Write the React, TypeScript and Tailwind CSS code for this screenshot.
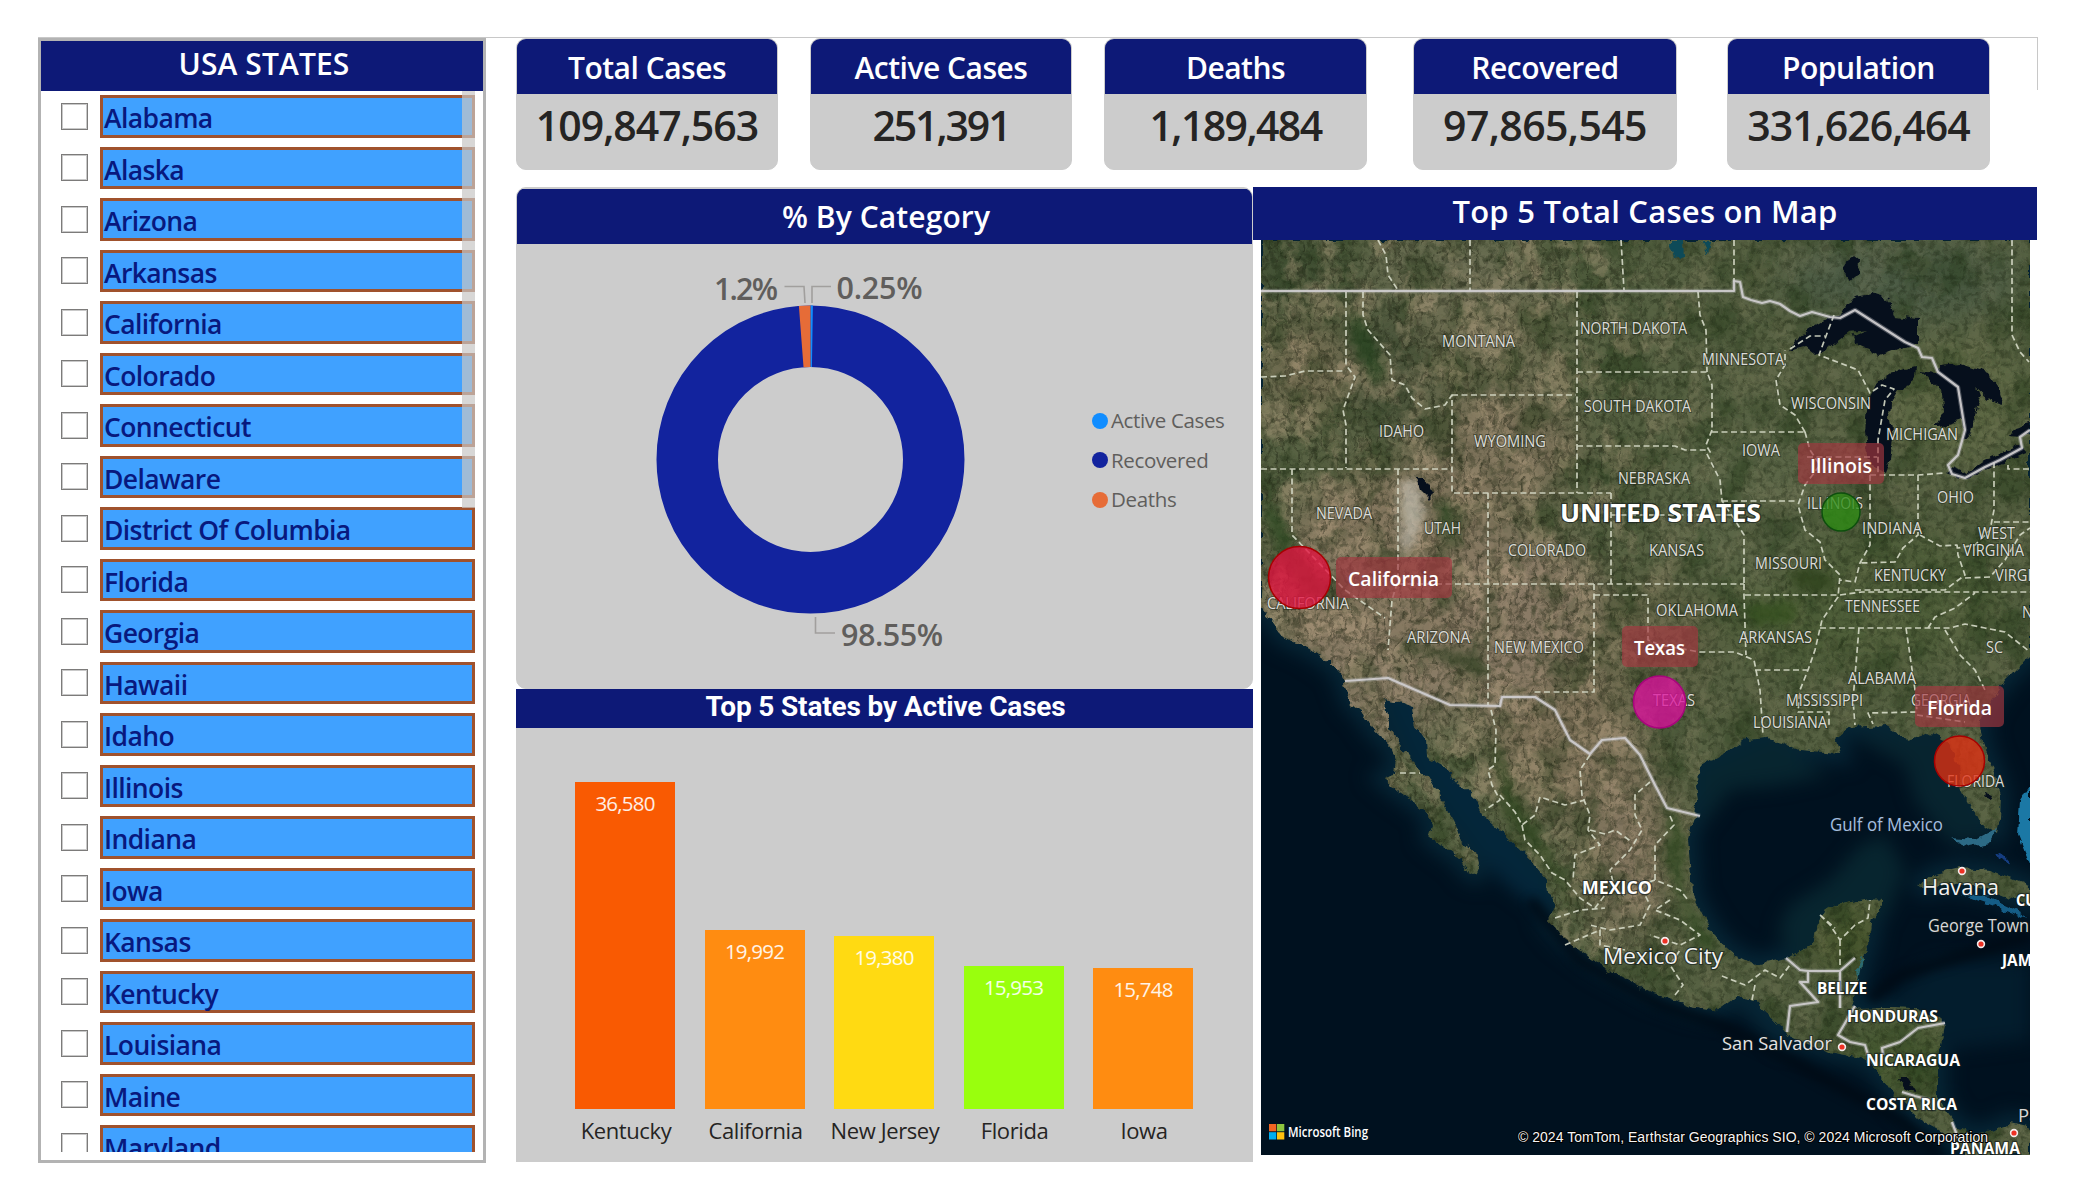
const STATES = [
  'Alabama', 'Alaska', 'Arizona', 'Arkansas', 'California', 'Colorado', 'Connecticut', 'Delaware',
  'District Of Columbia', 'Florida', 'Georgia', 'Hawaii', 'Idaho', 'Illinois', 'Indiana', 'Iowa',
  'Kansas', 'Kentucky', 'Louisiana', 'Maine', 'Maryland',
];

const KPIS = [
  { title: 'Total Cases', value: '109,847,563', box: 'w-[262px]', fit: 'tracking-[-1px]' },
  { title: 'Active Cases', value: '251,391', box: 'w-[262px] ml-8', fit: 'tracking-[-2.1px]' },
  { title: 'Deaths', value: '1,189,484', box: 'w-[263px] ml-8', fit: 'tracking-[-1.6px]' },
  { title: 'Recovered', value: '97,865,545', box: 'w-[264px] ml-[46px]', fit: 'tracking-[-0.6px]' },
  { title: 'Population', value: '331,626,464', box: 'w-[263px] ml-[50px]', fit: 'tracking-[-1px]' },
];

const BARS = [
  { name: 'Kentucky', value: '36,580', bar: 'h-[327.5px] bg-[#f95a02]' },
  { name: 'California', value: '19,992', bar: 'h-[179px] bg-[#ff8c11]' },
  { name: 'New Jersey', value: '19,380', bar: 'h-[173px] bg-[#ffda12]' },
  { name: 'Florida', value: '15,953', bar: 'h-[143px] bg-[#99ff0d]' },
  { name: 'Iowa', value: '15,748', bar: 'h-[141px] bg-[#ff8c11]' },
];

const LEGEND = [
  { name: 'Active Cases', dot: 'bg-[#118dff]' },
  { name: 'Recovered', dot: 'bg-[#12239e]' },
  { name: 'Deaths', dot: 'bg-[#e66c37]' },
];

function StatesSlicer() {
  return (
    <aside className="flex h-[1125px] w-[448px] shrink-0 flex-col border-[3px] border-[#b3b3b3] bg-white">
      <h2 className="h-[50px] bg-[#0d1977] pl-[4px] text-center text-[30px] leading-[46px] font-semibold tracking-[0.1px] text-white">
        USA STATES
      </h2>
      <div className="relative mb-2 min-h-0 flex-1 overflow-hidden pt-[4px] pr-[8px] pl-[20px]">
        <ul className="flex flex-col gap-[9px]">
          {STATES.map((s) => (
            <li key={s} className="flex h-[42.5px] shrink-0 items-center">
              <span className="mr-3 h-[27px] w-[27px] shrink-0 border-[1.5px] border-[#7c7b7a] bg-white outline-1 -outline-offset-2 outline-[#c9c9c9]" />
              <span className="h-full flex-1 border-[3px] border-[#a0522d] bg-[#40a1ff] pl-px text-[26.5px] leading-[40px] font-semibold tracking-[-0.6px] text-[#08197e]">
                {s}
              </span>
            </li>
          ))}
        </ul>
        <div className="absolute top-0 right-[8px] h-[417px] w-[13px] bg-[#c8c6c4]/70" />
      </div>
    </aside>
  );
}

function KpiCard({ title, value, box, fit }: { title: string; value: string; box: string; fit: string }) {
  return (
    <section className={`${box} h-[132px] shrink-0 overflow-hidden rounded-[10px] border border-[#cccccc] bg-[#cccccc] text-center font-semibold`}>
      <h2 className="h-[55px] bg-[#0d1977] text-[30px] leading-[57px] tracking-[-0.5px] text-white">{title}</h2>
      <p className={`${fit} text-[41px] leading-[62px] text-[#252423]`}>{value}</p>
    </section>
  );
}

function Donut() {
  const cx = 293.5;
  const cy = 215.5;
  const r = 123.25;
  const c = 2 * Math.PI * r;
  const ring = (len: number, start: number, color: string) => (
    <circle
      cx={cx} cy={cy} r={r} fill="none" stroke={color} strokeWidth="61.5"
      strokeDasharray={`${len * c} ${c}`} transform={`rotate(${start * 360 - 90} ${cx} ${cy})`}
    />
  );
  return (
    <svg width="569" height="444" viewBox="0 0 569 444" className="shrink-0">
      {ring(1, 0, '#12239e')}
      {ring(0.0025, 0, '#118dff')}
      {ring(0.012, 0.988, '#e66c37')}
      <g fill="none" stroke="#a19f9d" strokeWidth="1.6">
        <path d="M267.5 42.5H287L288 59" />
        <path d="M314 42.5H295V59" />
        <path d="M298.500 373V389H318" />
      </g>
      <g fontSize="30.500" fontWeight="600" fill="#605e5c">
        <text x="197" y="56" textLength="64">1.2%</text>
        <text x="319.500" y="55" textLength="86">0.25%</text>
        <text x="324" y="402" textLength="102">98.55%</text>
      </g>
    </svg>
  );
}

function CategoryPanel() {
  return (
    <section className="h-[502px] overflow-hidden rounded-[10px] border border-[#cccccc] bg-[#cccccc]">
      <h2 className="mt-px h-[55px] bg-[#0d1977] pl-[3px] text-center text-[30px] leading-[56px] font-semibold tracking-[0.1px] text-white">
        % By Category
      </h2>
      <div className="flex">
        <Donut />
        <ul className="mt-[157px] flex flex-col text-[20.5px] tracking-[-0.35px] text-[#605e5c]">
          {LEGEND.map((l) => (
            <li key={l.name} className="flex h-[39.500px] items-center gap-[3px] whitespace-nowrap">
              <span className={`${l.dot} ml-[6px] h-4 w-4 rounded-full`} />
              {l.name}
            </li>
          ))}
        </ul>
      </div>
    </section>
  );
}

function BarPanel() {
  return (
    <section className="h-[473px] bg-[#cccccc]">
      <h2 className="h-[39px] bg-[#0d1977] pl-[2px] text-center font-[Roboto] text-[28px] leading-[36px] font-bold tracking-[-0.15px] text-white">
        Top 5 States by Active Cases
      </h2>
      <div className="flex h-[381px] items-end gap-[29.5px] pl-[59px]">
        {BARS.map((b) => (
          <div key={b.name} className={`${b.bar} w-[100px] pt-[7px] text-center text-[20.5px] leading-[29px] tracking-[-0.8px] text-white/90`}>
            {b.value}
          </div>
        ))}
      </div>
      <div className="flex gap-[9.5px] pl-[50px] text-[22px] leading-[42px] tracking-[-0.4px] text-[#252423]">
        {BARS.map((b) => (
          <div key={b.name} className="w-[120px] text-center whitespace-nowrap">{b.name}</div>
        ))}
      </div>
    </section>
  );
}

const LAND =
  'M1261 607L1272 622 1283 637 1308 648 1330 662 1342 675 1346 690 1352 704 1362 712 1372 728 1392 748 1397 762 1395 774 1384 779 1397 790 1410 799 1425 810 1433 825 1430 836 1445 848 1462 860 1470 872 1476 874 1480 865 1477 852 1462 842 1455 822 1442 800 1430 780 1418 770 1410 755 1400 745 1392 732 1387 715 1384 700 1396 702 1412 708 1415 725 1425 740 1426 757 1445 768 1460 785 1476 800 1483 815 1500 830 1520 850 1535 865 1547 880 1548 893 1555 905 1548 920 1560 935 1580 950 1600 965 1625 978 1650 992 1668 997 1690 1006 1713 1010 1727 1005 1738 997 1755 1000 1772 1018 1788 1035 1810 1045 1830 1052 1860 1058 1870 1065 1885 1080 1900 1100 1918 1118 1940 1130 1950 1140 1965 1155H2030V1127L2010 1122 1995 1130 1975 1135 1955 1125 1945 1110 1938 1095V1060L1942 1040 1945 1025 1935 1017 1910 1008 1890 1007 1860 1008 1850 1006 1857 985 1863 960 1870 940 1872 922 1882 905 1882 900 1870 899 1835 905 1820 915 1815 930 1812 945 1795 955 1778 960 1755 965 1735 955 1718 940 1705 920 1692 895 1690 865 1688 840 1694 815 1697 800 1695 785 1700 768 1730 750 1745 740 1765 738 1785 744 1800 750 1825 752 1840 754 1835 738 1850 728 1885 726 1895 732 1908 740 1930 732 1945 740 1955 755 1960 775 1962 790 1972 810 1985 825 1997 833 2000 818 2001 795 1995 775 1985 750 1980 725 1990 700 2005 680 2030 655V240H1261ZM1915 888L1935 874 1960 868 1990 870 2030 885V905L2010 898 1985 888 1950 883Z';

const LAKES = [
  'M1790 350L1800 335 1825 320 1838 314 1855 297 1872 294 1888 299 1895 317 1918 320 1918 345 1900 348 1880 356 1857 346 1853 336 1866 330 1850 332 1830 347 1815 354 1805 346Z',
  'M1865 430L1868 400 1878 382 1890 374 1915 368 1914 376 1905 390 1897 390 1890 402 1889 420 1893 440 1890 460 1885 474 1876 470 1867 455Z',
  'M1918 371L1935 373 1940 366 1960 364 1988 373 1998 387 2003 405 1990 401 1975 387 1980 400 1975 418 1971 432 1964 440 1962 420 1945 425 1935 428 1944 412 1943 392Z',
  'M1945 472L1953 466 1968 472 1985 460 2020 445 2026 452 2005 462 1985 470 1965 480Z',
  'M2010 436L2016 427 2030 423V433L2022 437Z',
  'M1845 262L1853 256 1860 262 1859 274 1851 280 1843 270Z',
  'M1416 478L1424 478 1434 494 1429 499 1420 490Z',
  'M1898 1078L1908 1078 1917 1092 1905 1090Z',
  'M1986 792L1992 794 1990 799 1985 797Z',
];

// State and provincial boundaries, drawn dashed.
const STATE_LINES =
  'M1470 240V291M1378 240L1386 255 1388 275 1398 290M1621 240L1624 290M1734 240V282M2012 240V335L2020 352 2029 362M1346 292V365L1355 377 1343 410 1346 425V468M1261 377L1285 376 1305 371 1346 371M1363 292V315L1368 330 1390 355 1392 380 1405 385 1412 398 1425 409 1445 405 1452 395V493H1611M1452 395H1576M1577 292V493M1577 372H1707L1712 385V430M1577 446H1675L1685 450 1705 450 1720 480 1722 501 1735 520 1744 535V584M1261 469H1452M1292 469V535L1345 590 1385 618M1398 469V580L1392 600 1388 650M1488 493V705M1398 584H1744M1611 493V584M1611 515H1735M1594 584V692H1533M1594 595H1648V640L1660 645 1700 652 1735 652 1754 660 1760 690 1763 735M1744 584V595L1746 655M1698 292L1700 315 1706 330 1707 372M1712 430L1706 445 1712 455M1712 432H1805M1722 501H1798M1805 432L1795 415 1780 405 1776 380 1785 365V350M1805 432L1810 450 1820 465 1805 485 1798 505 1805 530 1820 542 1825 560 1840 575 1838 597 1822 620 1815 650 1808 670 1800 690 1798 712H1829V726M1790 349L1810 336 1825 336M1834 315L1826 336 1819 355 1840 363 1858 370 1870 393 1882 385 1894 389 1885 400 1878 440V475M1807 457H1877M1870 475H1918L1945 473M1870 475V545L1860 563 1855 582 1840 580M1918 475V535L1903 548 1895 562 1860 563M1745 595H1828L1840 595 1862 592 2030 592M1855 590L1945 590 1965 575 1958 555 1957 545 1940 546 1920 535M1994 462V510L1990 530 1975 545 1958 548M1994 522H2030M2008 465V469H2030M1965 578L1990 577 2005 560 2020 535 2030 528M1820 628H1950L1965 624 1985 628 2005 632 2030 652M1928 628L1935 617 1955 608 1975 593M1859 628L1853 700 1855 725M1906 628L1915 690 1917 712 1868 713 1873 724M1945 630L1960 655 1975 670 1985 690M1755 670H1810M1917 715L1965 722M1400 773H1420M1491 710L1496 730 1495 765 1488 770 1492 785 1500 800 1485 810M1500 795L1515 812 1522 825 1535 815 1540 797 1565 805 1585 800M1522 825L1525 840 1540 855 1552 873 1565 880 1580 898 1595 908 1605 895M1590 755L1580 770 1582 795 1590 815 1588 830 1600 845 1575 855 1573 880M1650 782L1635 795 1635 815 1642 830 1630 850 1610 870 1615 890 1625 895M1590 830L1605 834 1615 830 1632 842M1670 816L1674 825 1655 845 1655 880 1680 890 1688 900M1655 880L1640 885 1650 905 1640 925 1610 930 1590 925M1670 900L1655 910 1680 920 1700 935 1680 945 1650 935M1555 918L1580 910 1605 908M1565 945L1600 930 1600 945 1625 950M1722 976L1745 985 1765 970 1780 978 1790 965M1675 995L1683 985 1670 965 1680 950M1755 985L1752 1000M1820 915L1830 925 1840 940 1855 925 1868 918 1870 900M1840 940V965M1820 915L1835 928';

const NATION_LINES =
  'M1261 291H1734V281L1740 282 1743 297 1751 300 1762 303 1770 301 1780 304 1790 311 1800 316 1812 312 1830 317 1840 318 1855 310 1905 342 1918 348 1922 357 1932 358 1938 372 1958 387 1965 430 1958 455 1948 465 1952 474 1965 478 1985 467 2000 460 2022 448 2020 437 2030 430M1345 681L1388 678 1450 705 1500 706 1502 697 1535 697 1555 710 1570 740 1590 754 1602 740 1625 738 1640 755 1655 785 1667 808 1700 816M1786 958L1800 970 1808 971 1840 971V1008M1808 971V982L1800 982 1818 1002 1790 1006 1787 1032M1840 971L1855 958M1855 1006L1838 1035 1850 1042 1865 1045 1868 1055M1945 1023L1918 1028 1900 1042 1882 1048 1883 1055M1902 1092L1915 1096 1930 1100M1952 1122L1958 1138';

type Label = [string, number, number, number];

const STATE_LABELS: Label[] = [
  ['MONTANA', 1442, 347, 73], ['NORTH DAKOTA', 1580, 334, 107], ['SOUTH DAKOTA', 1584, 412, 107],
  ['IDAHO', 1379, 437, 45], ['WYOMING', 1474, 447, 72], ['NEVADA', 1316, 519, 56], ['UTAH', 1424, 534, 37],
  ['COLORADO', 1508, 556, 78], ['KANSAS', 1649, 556, 55], ['NEBRASKA', 1618, 484, 72], ['MINNESOTA', 1702, 365, 82],
  ['WISCONSIN', 1791, 409, 80], ['MICHIGAN', 1886, 440, 72], ['IOWA', 1742, 456, 38], ['OHIO', 1937, 503, 37],
  ['ILLINOIS', 1807, 509, 56], ['INDIANA', 1862, 534, 60], ['WEST', 1978, 539, 37], ['VIRGINIA', 1963, 556, 61],
  ['MISSOURI', 1755, 569, 67], ['KENTUCKY', 1874, 581, 72], ['VIRGINIA', 1995, 581, 61], ['OKLAHOMA', 1656, 616, 82],
  ['TENNESSEE', 1845, 612, 75], ['NC', 2022, 618, 20], ['ARKANSAS', 1739, 643, 73], ['SC', 1986, 653, 17],
  ['ARIZONA', 1407, 643, 63], ['NEW MEXICO', 1494, 653, 90], ['CALIFORNIA', 1267, 609, 82], ['ALABAMA', 1848, 684, 68],
  ['TEXAS', 1653, 706, 42], ['MISSISSIPPI', 1786, 706, 77], ['GEORGIA', 1911, 706, 60], ['LOUISIANA', 1753, 728, 74],
  ['FLORIDA', 1947, 787, 57],
];

const NATION_LABELS: Label[] = [
  ['BELIZE', 1817, 994, 50], ['HONDURAS', 1847, 1022, 91], ['NICARAGUA', 1866, 1066, 94],
  ['COSTA RICA', 1866, 1110, 91], ['PANAMA', 1950, 1154, 70], ['CUBA', 2016, 906, 40], ['JAMAICA', 2002, 966, 66],
];

const CITY_DOTS = [[1665, 941], [1962, 871], [1981, 944], [1842, 1047], [2014, 1133]];

const BUBBLES = [
  { name: 'California', cx: 1299.5, cy: 577.5, r: 31, fill: '#e3123f', line: '#a80000', bx: 1336, by: 557, bw: 116, tx: 1348, ty: 586, tw: 91 },
  { name: 'Illinois', cx: 1841, cy: 512, r: 19, fill: '#2b8a12', line: '#0d4f0d', bx: 1798, by: 443, bw: 86, tx: 1810, ty: 473, tw: 62 },
  { name: 'Texas', cx: 1659.5, cy: 702, r: 26, fill: '#dd129c', line: '#a8057c', bx: 1622, by: 626, bw: 76, tx: 1634, ty: 655, tw: 51 },
  { name: 'Florida', cx: 1959.5, cy: 761, r: 25, fill: '#e02f12', line: '#a80000', bx: 1915, by: 686, bw: 89, tx: 1927, ty: 715, tw: 65 },
];

function MapCanvas() {
  return (
    <svg width="769" height="915" viewBox="1261 240 769 915" className="ml-[8px] block">
      <defs>
        <clipPath id="land"><path d={LAND} clipRule="evenodd" /></clipPath>
        <filter id="soft" x="-50%" y="-50%" width="200%" height="200%" colorInterpolationFilters="sRGB"><feGaussianBlur stdDeviation="20" /></filter>
        <filter id="patch" x="-50%" y="-50%" width="200%" height="200%" colorInterpolationFilters="sRGB"><feGaussianBlur stdDeviation="5" /></filter>
        <filter id="edge" x="-10%" y="-10%" width="120%" height="120%" colorInterpolationFilters="sRGB"><feGaussianBlur stdDeviation="9" /></filter>
        <filter id="rough" x="-2%" y="-2%" width="104%" height="104%" colorInterpolationFilters="sRGB">
          <feTurbulence type="fractalNoise" baseFrequency="0.09" numOctaves="3" seed="4" />
          <feDisplacementMap in="SourceGraphic" scale="9" xChannelSelector="R" yChannelSelector="G" />
          <feGaussianBlur stdDeviation="0.7" />
        </filter>
        <filter id="dark" x="0" y="0" width="100%" height="100%" colorInterpolationFilters="sRGB">
          <feTurbulence type="fractalNoise" baseFrequency="0.028 0.02" numOctaves="6" seed="11" />
          <feColorMatrix values="0 0 0 0 0.15  0 0 0 0 0.23  0 0 0 0 0.11  4.4 0 0 0 -2.1" />
        </filter>
        <filter id="light" x="0" y="0" width="100%" height="100%" colorInterpolationFilters="sRGB">
          <feTurbulence type="fractalNoise" baseFrequency="0.035 0.025" numOctaves="6" seed="29" />
          <feColorMatrix values="0 0 0 0 0.72  0 0 0 0 0.64  0 0 0 0 0.52  0 4.2 0 0 -1.95" />
        </filter>
        <filter id="ridges" x="0" y="0" width="100%" height="100%" colorInterpolationFilters="sRGB">
          <feTurbulence type="turbulence" baseFrequency="0.09 0.05" numOctaves="4" seed="17" />
          <feColorMatrix values="0 0 0 0 0.10  0 0 0 0 0.11  0 0 0 0 0.06  -6 0 0 0 1.5" />
        </filter>
        <filter id="grain" x="0" y="0" width="100%" height="100%" colorInterpolationFilters="sRGB">
          <feTurbulence type="fractalNoise" baseFrequency="0.16" numOctaves="3" seed="7" />
          <feColorMatrix values="0 0 0 0 0.08  0 0 0 0 0.12  0 0 0 0 0.05  0 0 3 0 -1.3" />
        </filter>
        <linearGradient id="fadeWest">
          <stop offset="0" stopColor="#fff" />
          <stop offset=".42" stopColor="#fff" />
          <stop offset=".6" stopColor="#444" />
          <stop offset="1" stopColor="#333" />
        </linearGradient>
        <mask id="west"><rect x="1261" y="240" width="769" height="915" fill="url(#fadeWest)" /></mask>
      </defs>
      <rect x="1261" y="240" width="769" height="915" fill="#00111f" />
      <g filter="url(#edge)">
        <path d={LAND} fill="#0a2a38" stroke="#052434" strokeWidth="20" />
        <path d="M1384 690L1420 700 1550 885 1545 915 1500 880 1420 770Z" fill="#04263a" />
        <path d="M1800 975L1778 930 1790 905 1830 880 1860 845 1885 835 1905 870 1890 910 1830 950Z" fill="#07252f" />
        <path d="M1700 770L1780 735 1800 760 1830 775 1780 785 1730 790 1700 830Z" fill="#07252f" />
        <path d="M1850 735L1950 735 1990 840 1950 845 1915 800 1905 765Z" fill="#07242f" />
        <path d="M1735 1005L1760 1005 1800 1050 1780 1050Z" fill="#062636" />
        <path d="M1885 1005L1930 960 2030 960V1040L1945 1050Z" fill="#031d2d" />
      </g>
      <g filter="url(#patch)" fill="none" stroke="#000a14" strokeWidth="12" opacity=".8">
        <path d="M1530 900L1580 960 1660 1005 1720 1025 1790 1060 1900 1120 1940 1155" />
        <path d="M1870 1000L1900 975 2030 935" />
      </g>
      <g filter="url(#rough)">
        <g clipPath="url(#land)">
          <rect x="1261" y="240" width="769" height="915" fill="#566142" />
          <g filter="url(#soft)">
            <ellipse cx="1400" cy="590" rx="130" ry="130" fill="#84775f" />
            <ellipse cx="1360" cy="690" rx="90" ry="60" fill="#8b7d67" />
            <ellipse cx="1530" cy="640" rx="80" ry="110" fill="#8a7b66" />
            <ellipse cx="1500" cy="450" rx="80" ry="60" fill="#7b7159" />
            <ellipse cx="1310" cy="370" rx="50" ry="50" fill="#766f54" />
            <ellipse cx="1490" cy="340" rx="80" ry="60" fill="#717054" />
            <ellipse cx="1450" cy="270" rx="90" ry="30" fill="#6f7056" />
            <ellipse cx="1300" cy="270" rx="50" ry="40" fill="#3f4e32" />
            <ellipse cx="1390" cy="370" rx="40" ry="60" fill="#485239" />
            <ellipse cx="1570" cy="750" rx="80" ry="70" fill="#7f735a" />
            <ellipse cx="1630" cy="850" rx="50" ry="80" fill="#83765f" />
            <ellipse cx="1860" cy="600" rx="150" ry="70" fill="#4e5e39" />
            <ellipse cx="1750" cy="500" rx="80" ry="90" fill="#5b6647" />
            <ellipse cx="1900" cy="280" rx="120" ry="40" fill="#4c5c46" />
            <ellipse cx="1850" cy="940" rx="40" ry="40" fill="#46552c" />
            <ellipse cx="1900" cy="1060" rx="60" ry="40" fill="#41552d" />
            <ellipse cx="1650" cy="640" rx="60" ry="60" fill="#606245" />
            <ellipse cx="1960" cy="400" rx="70" ry="60" fill="#5d6844" />
          </g>
          <rect x="1261" y="240" width="769" height="915" filter="url(#dark)" opacity="0.46" />
          <g mask="url(#west)">
            <rect x="1261" y="240" width="769" height="915" filter="url(#light)" opacity="0.44" />
            <rect x="1261" y="240" width="769" height="915" filter="url(#ridges)" opacity="0.36" />
          </g>
          <rect x="1261" y="240" width="769" height="915" filter="url(#grain)" opacity="0.36" />
          <g filter="url(#patch)" opacity=".75">
            <path d="M1400 485L1415 478 1425 510 1415 540 1402 560Z" fill="#c2bcae" />
            <path d="M1263 500L1278 512 1293 540 1330 590 1325 602 1300 590 1275 545Z" fill="#2d4a22" />
            <path d="M1352 310L1368 330 1388 375 1375 385 1350 340Z" fill="#274420" />
            <path d="M1440 500L1452 500 1455 550 1440 530Z" fill="#2c4722" />
            <path d="M1490 730L1515 790 1560 870 1575 920 1550 870 1505 815Z" fill="#2f4620" />
            <path d="M1665 800L1685 830 1685 900 1720 950 1700 950 1670 880Z" fill="#324b23" />
            <path d="M1395 640L1480 655 1490 680 1440 660Z" fill="#3a472a" />
            <path d="M1785 570L1830 572 1835 592 1800 590Z" fill="#33461f" />
            <path d="M1745 605L1800 600 1790 625 1750 622Z" fill="#35501f" />
          </g>
        </g>
        {LAKES.map((d) => <path key={d} d={d} fill="#060f1c" />)}
        <path d="M1671 242L1682 242 1683 256 1676 258ZM1702 242L1711 242 1708 254Z" fill="#0d4a58" />
        <path d="M2030 785L2020 800 2018 835 2030 865Z" fill="#1b78a5" />
        <path d="M1950 838L1975 840 1998 828 1990 843 1970 847Z" fill="#2c6a85" />
        <path d="M1995 852L2004 856 2010 863 1998 859Z" fill="#153d80" />
        <path d="M1960 894L1990 898 2010 907 2030 918 2015 914 1985 903Z" fill="#155d86" />
        <path d="M1858 965L1863 955 1859 985Z" fill="#2b6a70" />
      </g>
      <g fill="none" strokeLinejoin="round">
        <path d={STATE_LINES} stroke="#d6dac8" strokeWidth="1.7" strokeDasharray="6 3.500" opacity=".9" />
        <path d={NATION_LINES} stroke="#d5d4d6" strokeWidth="4.500" opacity=".3" />
        <path d={NATION_LINES} stroke="#cfcdcf" strokeWidth="2.2" opacity=".92" />
      </g>
      <g fontSize="16" fill="#dcdcd8" stroke="#20281a" strokeOpacity=".5" strokeWidth="2" paintOrder="stroke">
        {STATE_LABELS.map(([t, x, y, w]) => (
          <text key={`${t}${x}`} x={x} y={y} textLength={w} lengthAdjust="spacingAndGlyphs">{t}</text>
        ))}
      </g>
      <g fontSize="16.500" fontWeight="700" fill="#fff" stroke="#10181a" strokeOpacity=".6" strokeWidth="2.500" paintOrder="stroke">
        {NATION_LABELS.map(([t, x, y, w]) => (
          <text key={t} x={x} y={y} textLength={w} lengthAdjust="spacingAndGlyphs">{t}</text>
        ))}
        <text x="1560" y="522" fontSize="25" textLength="201" lengthAdjust="spacingAndGlyphs">UNITED STATES</text>
        <text x="1582" y="894" fontSize="18.500" textLength="70" lengthAdjust="spacingAndGlyphs">MEXICO</text>
      </g>
      <g fill="#f2f2f2" stroke="#101a1c" strokeOpacity=".6" strokeWidth="2.200" paintOrder="stroke">
        <text x="1603" y="964" fontSize="22" textLength="120" lengthAdjust="spacingAndGlyphs">Mexico City</text>
        <text x="1922" y="895" fontSize="22" textLength="77" lengthAdjust="spacingAndGlyphs">Havana</text>
        <text x="1928" y="932" fontSize="18.500" textLength="101" lengthAdjust="spacingAndGlyphs" fill="#d8d8d8">George Town</text>
        <text x="1722" y="1050" fontSize="19" textLength="110" lengthAdjust="spacingAndGlyphs" fill="#e4e4e4">San Salvador</text>
        <text x="2018" y="1122" fontSize="18.500" fill="#d8d8d8">Panama City</text>
        <text x="1830" y="831" fontSize="18" textLength="113" lengthAdjust="spacingAndGlyphs" fill="#a3bfe0">Gulf of Mexico</text>
      </g>
      {CITY_DOTS.map(([x, y]) => <circle key={x} cx={x} cy={y} r="3.400" fill="#ee3124" stroke="#f3eded" strokeWidth="1.600" />)}
      {BUBBLES.map((b) => (
        <g key={b.name}>
          <circle cx={b.cx} cy={b.cy} r={b.r} fill={b.fill} fillOpacity=".78" stroke={b.line} strokeWidth="1.500" />
          <rect x={b.bx} y={b.by} width={b.bw} height="41" rx="5" fill="#a4373f" fillOpacity=".66" />
          <text x={b.tx} y={b.ty} fontSize="20.500" fontWeight="600" fill="#fff" textLength={b.tw} lengthAdjust="spacingAndGlyphs">{b.name}</text>
        </g>
      ))}
      <g>
        <rect x="1269" y="1124" width="7.300" height="7.300" fill="#f26522" />
        <rect x="1277" y="1124" width="7.300" height="7.300" fill="#8dc63f" />
        <rect x="1269" y="1132.200" width="7.300" height="7.300" fill="#00aeef" />
        <rect x="1277" y="1132.200" width="7.300" height="7.300" fill="#ffc20e" />
        <text x="1288" y="1137" fontSize="14" fontWeight="600" fill="#fff" textLength="80" lengthAdjust="spacingAndGlyphs">Microsoft Bing</text>
        <text x="1518" y="1142" fontSize="14" fontFamily="Liberation Sans" fill="#f5f5f5" stroke="#000" strokeWidth="2" paintOrder="stroke" textLength="470">
          © 2024 TomTom, Earthstar Geographics SIO, © 2024 Microsoft Corporation
        </text>
      </g>
    </svg>
  );
}

function MapPanel() {
  return (
    <section className="w-[784px]">
      <h2 className="h-[53px] bg-[#0d1977] text-center text-[31px] leading-[49px] font-semibold tracking-[0.25px] text-white">
        Top 5 Total Cases on Map
      </h2>
      <MapCanvas />
    </section>
  );
}

export default function App() {
  return (
    <div className="h-[1200px] w-[2075px] overflow-hidden bg-white pt-[37px] pl-[38px] font-['Open_Sans','Noto_Sans',sans-serif]">
      <div className="relative flex w-[2000px] border-t border-[#c8c8c8]">
        <div className="absolute top-0 right-0 h-[52px] w-px bg-[#c8c8c8]" />
        <StatesSlicer />
        <main className="ml-[30px]">
          <div className="flex">
            {KPIS.map((k) => <KpiCard key={k.title} {...k} />)}
          </div>
          <div className="mt-[17px] flex">
            <div className="w-[737px]">
              <CategoryPanel />
              <BarPanel />
            </div>
            <MapPanel />
          </div>
        </main>
      </div>
    </div>
  );
}
